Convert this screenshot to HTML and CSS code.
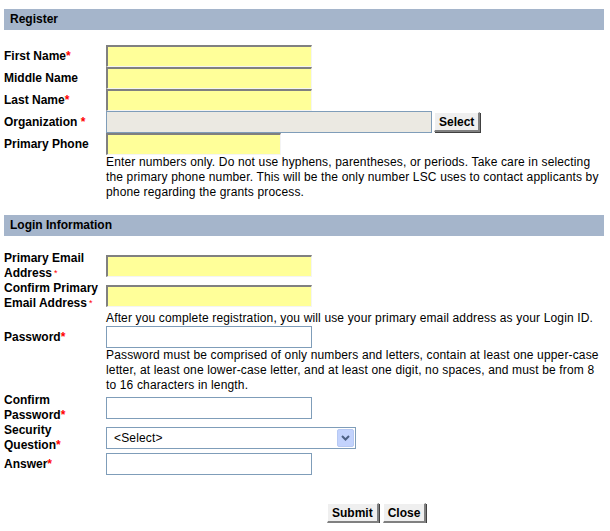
FILE: index.html
```html
<!DOCTYPE html>
<html>
<head>
<meta charset="utf-8">
<title>Register</title>
<link rel="stylesheet" href="styles.css">
</head>
<body>
<div class="page">
  <div class="section-header">Register</div>
  <div class="form register">
    <div class="row">
      <label class="lbl">First Name<span class="req">*</span></label>
      <div class="field"><input class="req-input w206" type="text"></div>
    </div>
    <div class="row">
      <label class="lbl">Middle Name</label>
      <div class="field"><input class="req-input w206" type="text"></div>
    </div>
    <div class="row">
      <label class="lbl">Last Name<span class="req">*</span></label>
      <div class="field"><input class="req-input w206" type="text"></div>
    </div>
    <div class="row">
      <label class="lbl">Organization <span class="req">*</span></label>
      <div class="field"><input class="org-input" type="text" disabled><button class="btn select-btn" type="button">Select</button></div>
    </div>
    <div class="row">
      <label class="lbl">Primary Phone</label>
      <div class="field"><input class="req-input w175" type="text"></div>
    </div>
    <div class="row help-row">
      <div></div>
      <p class="help">Enter numbers only. Do not use hyphens, parentheses, or periods. Take care in selecting the primary phone number. This will be the only number LSC uses to contact applicants by phone regarding the grants process.</p>
    </div>
  </div>

  <div class="section-header">Login Information</div>
  <div class="form login">
    <div class="row tall">
      <label class="lbl"><span class="line">Primary Email</span><span class="line">Address<span class="req small">*</span></span></label>
      <div class="field"><input class="req-input w206" type="text"></div>
    </div>
    <div class="row tall">
      <label class="lbl"><span class="line">Confirm Primary</span><span class="line">Email Address<span class="req small">*</span></span></label>
      <div class="field"><input class="req-input w206" type="text"></div>
    </div>
    <div class="row help-row">
      <div></div>
      <p class="help">After you complete registration, you will use your primary email address as your Login ID.</p>
    </div>
    <div class="row">
      <label class="lbl">Password<span class="req">*</span></label>
      <div class="field"><input class="plain-input w206" type="password"></div>
    </div>
    <div class="row help-row">
      <div></div>
      <p class="help">Password must be comprised of only numbers and letters, contain at least one upper-case letter, at least one lower-case letter, and at least one digit, no spaces, and must be from 8 to 16 characters in length.</p>
    </div>
    <div class="row tall">
      <label class="lbl"><span class="line">Confirm</span><span class="line">Password<span class="req">*</span></span></label>
      <div class="field"><input class="plain-input w206" type="password"></div>
    </div>
    <div class="row tall">
      <label class="lbl"><span class="line">Security</span><span class="line">Question<span class="req">*</span></span></label>
      <div class="field">
        <div class="select">
          <span class="select-text">&lt;Select&gt;</span>
          <span class="select-arrow"><svg width="9" height="6" viewBox="0 0 9 6"><path d="M1 1 L4.5 4.5 L8 1" fill="none" stroke="#4d6185" stroke-width="2"/></svg></span>
        </div>
      </div>
    </div>
    <div class="row">
      <label class="lbl">Answer<span class="req">*</span></label>
      <div class="field"><input class="plain-input w206" type="text"></div>
    </div>
  </div>

  <div class="actions">
    <button class="btn" type="button">Submit</button>
    <button class="btn" type="button">Close</button>
  </div>
</div>
</body>
</html>
```

FILE: styles.css
```css
* { box-sizing: border-box; }
html, body { margin: 0; padding: 0; background: #ffffff; }
body {
  font-family: "Liberation Sans", Arial, sans-serif;
  font-size: 12px;
  color: #000000;
}
.page {
  width: 610px;
  padding: 9px 6px 0 4px;
}
.section-header {
  height: 21px;
  line-height: 21px;
  background: #a5b5cb;
  font-weight: bold;
  padding-left: 6px;
}
.form { display: flex; flex-direction: column; }
.register { padding: 15px 0 15px; }
.login { padding: 15px 0 0; }
.row {
  display: grid;
  grid-template-columns: 102px 1fr;
  align-items: center;
  min-height: 22px;
}
.row.tall { min-height: 30px; }
.lbl {
  font-weight: bold;
  line-height: 15px;
  padding-right: 4px;
}
.line { display: block; white-space: nowrap; }
.req { color: #ff0000; }
.req.small { font-weight: normal; font-size: 9px; vertical-align: text-top; padding-left: 2px; }
.field { display: flex; align-items: center; }
input {
  font: inherit;
  margin: 0;
  height: 22px;
  padding: 1px 3px;
}
.req-input {
  background: #ffff99;
  border-style: solid;
  border-width: 2px 1px 1px 2px;
  border-color: #808080 #f4f4f4 #f4f4f4 #808080;
}
.plain-input {
  background: #ffffff;
  border: 1px solid #7f9db9;
}
.w206 { width: 206px; }
.w175 { width: 175px; }
.org-input {
  width: 326px;
  background: #ebe9e2;
  border: 1px solid #7f9db9;
}
.btn {
  font: inherit;
  font-weight: bold;
  height: 20px;
  padding: 0 4px;
  background: #efefef;
  border-style: solid;
  border-width: 1px 2px 2px 1px;
  border-color: #ffffff #808080 #808080 #ffffff;
  box-shadow: 1px 1px 0 #404040;
  color: #000;
}
.select-btn { margin-left: 2px; height: 20px; }
.help-row { min-height: 0; }
.help {
  margin: 0;
  line-height: 15px;
  padding: 0;
  width: 498px;
  letter-spacing: 0.15px;
}
.select {
  width: 250px;
  height: 22px;
  border: 1px solid #7f9db9;
  background: #fff;
  display: flex;
  align-items: center;
  justify-content: space-between;
  padding: 1px;
}
.select-text { padding-left: 6px; font-size: 12px; letter-spacing: 0.15px; }
.select-arrow {
  width: 17px;
  height: 18px;
  background: #c3d3fd;
  border: 1px solid #b7c9f3;
  display: flex;
  align-items: center;
  justify-content: center;
  border-radius: 2px;
}
.actions {
  display: flex;
  gap: 4px;
  padding: 28px 0 0 323px;
}
```
